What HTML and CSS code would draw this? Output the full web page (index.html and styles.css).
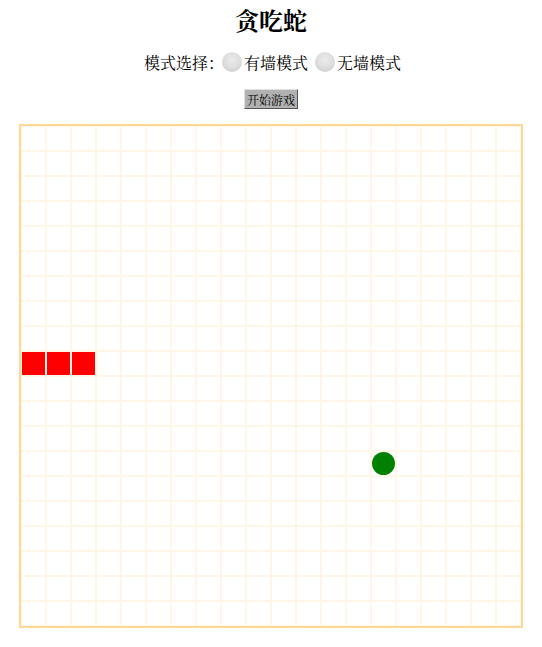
FILE: index.html
```html
<!DOCTYPE html>
<html lang="zh-CN">
<head>
<meta charset="utf-8">
<title>贪吃蛇</title>
<link rel="stylesheet" href="styles.css">
</head>
<body>
  <h2 class="title">贪吃蛇</h2>
  <div class="modes">
    <span class="label">模式选择：</span>
    <input class="radio r1" type="radio" name="mode" id="wall">
    <label class="opt" for="wall">有墙模式</label>
    <input class="radio r2" type="radio" name="mode" id="nowall">
    <label class="opt" for="nowall">无墙模式</label>
  </div>
  <div class="actions">
    <button class="start" type="button">开始游戏</button>
  </div>
  <div class="board">
    <div class="seg" style="grid-area: 10 / 1"></div>
    <div class="seg" style="grid-area: 10 / 2"></div>
    <div class="seg" style="grid-area: 10 / 3"></div>
    <div class="food" style="grid-area: 14 / 15"></div>
  </div>
</body>
</html>
```
FILE: styles.css
```css
html, body {
  margin: 0;
  padding: 0;
  background: #ffffff;
}
body {
  font-family: "Noto Serif CJK SC", "Liberation Serif", "Noto Sans CJK SC", serif;
  color: #000;
}
.title {
  margin: 6px 0 0;
  font-size: 24px;
  line-height: 28px;
  font-weight: bold;
  text-align: center;
}
.modes {
  margin-top: 17px;
  padding-left: 3px;
  height: 24px;
  display: flex;
  justify-content: center;
  align-items: center;
  font-size: 16px;
  line-height: 24px;
}
.label {
  flex: none;
  width: 80px;
  white-space: nowrap;
}
.opt {
  flex: none;
  width: 64px;
  white-space: nowrap;
}
.radio {
  -webkit-appearance: none;
  appearance: none;
  flex: none;
  width: 20px;
  height: 20px;
  margin: 0 2px 0 0;
  border-radius: 50%;
  background: radial-gradient(circle at 50% 40%, #ececec 0%, #dedede 50%, #c4c4c4 100%);
  position: relative;
  top: -1px;
}
.r1 {
  margin-left: -2px;
}
.r2 {
  margin-left: 7px;
}
.actions {
  margin-top: 14px;
  display: flex;
  justify-content: center;
}
.start {
  font-family: inherit;
  font-size: 12px;
  line-height: 15px;
  height: 20px;
  padding: 1px 2px;
  background: #b1b1b1;
  border: 1px solid;
  border-color: #e0e0e0 #555 #555 #e0e0e0;
  color: #000;
}
.board {
  margin: 15px auto 0;
  width: 500px;
  height: 500px;
  border: 2px solid #ffd898;
  display: grid;
  grid-template-columns: repeat(20, 25px);
  grid-template-rows: repeat(20, 25px);
  background-color: #fff;
  background-image:
    linear-gradient(to right, #fff6e6 1px, transparent 1px, transparent 24px, #fff6e6 24px),
    linear-gradient(to bottom, #fff6e6 1px, transparent 1px, transparent 24px, #fff6e6 24px);
  background-size: 25px 25px;
}
.seg {
  margin: 1px;
  background: #ff0000;
}
.food {
  margin: 1px;
  border-radius: 50%;
  background: #008000;
}
```
